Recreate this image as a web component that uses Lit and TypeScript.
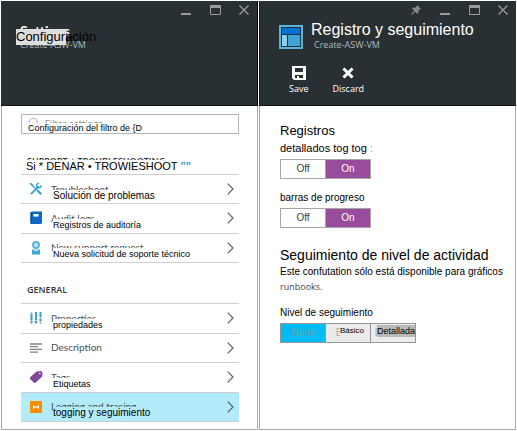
import { LitElement, html, css, svg, nothing } from "lit";
import { customElement, property } from "lit/decorators.js";
import { classMap } from "lit/directives/class-map.js";

const icons = {
  tools: svg`<g fill="none" stroke="#3ba3d0" stroke-linecap="round"><path d="M3.2 3.2 9 9" stroke-width="1.4"/><path d="M9 9 11.6 11.6" stroke-width="2.2"/><path d="M9.2 4.8 2.4 11.6" stroke-width="1.8"/><path d="M12 3.6A2.2 2.2 0 1 1 9.6 1.4" stroke-width="1.4"/><path d="M1.6 1.6 3.4 3.4" stroke-width="1.8"/></g>`,
  book: svg`<path fill="#0f6ac4" d="M1.5 1.5 3 0.5h10v11.5l-1 1H2l-.5-1z"/><path fill="#0a4d9c" d="M1.5 1.5h1.3V13H2l-.5-1z"/><path fill="#fff" d="M4.5 3h5v2.6h-5z"/>`,
  support: svg`<path fill="#59b4d9" d="M7 0a4 4 0 0 1 4 4c0 2.4-1.8 4.4-4 4.4S3 6.4 3 4a4 4 0 0 1 4-4z"/><circle cx="7" cy="4" r="2" fill="#c5e6f3"/><path fill="#3fa9d6" d="M3 8l4 2.500L11 8v5.500H3z"/><path fill="#a9dbee" d="M5 8.200h4L7 10.500z"/>`,
  sliders: svg`<path stroke="#aab4ba" stroke-width="1.4" d="M2.500 1v12M7 1v12M11.500 1v12"/><path stroke="#3ba3d0" stroke-width="2" d="M2.500 3v6M7 1v8M11.500 1v5"/><path stroke="#3ba3d0" stroke-width="2.4" d="M7 10v2M11.500 8v2M2.500 10v1.500"/>`,
  lines: svg`<path stroke="#808488" stroke-width="1.3" d="M1 3h12M1 5.700h8M1 8.400h12M1 11.100h8"/>`,
  tag: svg`<path fill="#804998" d="M7.500 1.600 12 1l1.500 1.200-.3 4.300-6.700 6.300-1.300.2L.8 8.700l.1-1.200z"/><circle cx="10.800" cy="3.600" r="1" fill="#d9bfe3"/>`,
  trace: svg`<path fill="#ff8c00" d="M1 1h12v12H1z"/><path fill="#fff" d="M4 5l2 1.500h2L10 5v4L8 7.500H6L4 9z"/>`,
};

type Row = { icon: keyof typeof icons; label: string; over?: string; large?: boolean; active?: boolean };

const supportRows: Row[] = [
  { icon: "tools", label: "Troubleshoot", over: "Solución de problemas", large: true },
  { icon: "book", label: "Audit logs", over: "Registros de auditoría" },
  { icon: "support", label: "New support request", over: "Nueva solicitud de soporte técnico" },
];
const generalRows: Row[] = [
  { icon: "sliders", label: "Properties", over: "propiedades" },
  { icon: "lines", label: "Description" },
  { icon: "tag", label: "Tags", over: "Etiquetas" },
  { icon: "trace", label: "Logging and tracing", over: "togging y seguimiento", large: true, active: true },
];

@customElement("window-controls")
class WindowControls extends LitElement {
  @property({ type: Boolean }) pin = false;

  static styles = css`
    :host { display: flex; justify-content: flex-end; gap: 19px; padding: 4px 8px 0; }
    button { all: unset; width: 10px; height: 10px; }
    svg { display: block; }
    path { fill: none; stroke: #999c9e; }
    .solid { fill: #85898b; stroke: none; }
  `;

  render() {
    return html`
      ${this.pin
        ? html`<button aria-label="Pin"><svg width="10" height="10"><path class="solid" d="M6 0l4 4-1.200.3-1.500 1.600.2 2.100-1.200.8L4.200 6.800.6 10 0 9.400 3.200 5.700 1.200 3.700l.8-1.200 2.200.2L5.800 1.200z"/></svg></button>`
        : nothing}
      <button aria-label="Minimize"><svg width="10" height="10"><path stroke-width="2" d="M0 9h10"/></svg></button>
      <button aria-label="Maximize"><svg width="11" height="10"><path d="M.5.5h10v9H.5z"/><path stroke-width="2" d="M0 2h11"/></svg></button>
      <button aria-label="Close"><svg width="10" height="10"><path stroke-width="1.3" d="M.5.5l9 9M9.500.5l-9 9"/></svg></button>
    `;
  }
}

@customElement("option-switch")
class OptionSwitch extends LitElement {
  @property() name = "";
  @property() label = "";

  static styles = css`
    fieldset { display: inline-flex; margin: 0; padding: 0; min-width: 0; border: 1px solid #a6a6a6; }
    label { display: block; width: 44px; height: 18px; text-align: center; font: 10px/18px "Liberation Sans", Arial, sans-serif; color: #3c3c3c; }
    label + label { border-left: 1px solid #a6a6a6; }
    input { position: absolute; opacity: 0; margin: 0; }
    label:has(:checked) { background: #984c9b; color: #fff; }
  `;

  render() {
    return html`<fieldset aria-label=${this.label}>
      <label><input type="radio" name=${this.name} />Off</label>
      <label><input type="radio" name=${this.name} checked />On</label>
    </fieldset>`;
  }
}

@customElement("app-root")
class AppRoot extends LitElement {
  static styles = css`
    :host { display: block; background: #fff; color: #000; font: 10px/12px "Liberation Sans", Arial, sans-serif; }
    h1, h2, p, ul { margin: 0; padding: 0; font-weight: 400; list-style: none; }
    .page { display: grid; grid-template-columns: 1fr 1fr; gap: 1px; padding: 1px; }
    .blade { display: flex; flex-direction: column; min-width: 0; }
    header { height: 105px; box-sizing: border-box; background: #293034; border-bottom: 1px solid #111517; }
    .left header { border-right: 1px solid #000; }
    .right header { border-left: 1px solid #1a1f22; }
    .body { flex: 1; border: 1px solid #a9a9a9; border-top: 0; }
    .left .body { padding: 8px 18px 7px 19px; }
    .right .body { padding: 16px 6px 8px 20px; }

    .orig { font-family: Lato, "Open Sans", sans-serif; }
    .stack { position: relative; }
    .over { position: absolute; top: 8px; left: 2px; font: 9px/12px "Liberation Sans", Arial, sans-serif; color: #000; background: #fff; white-space: nowrap; }
    .over.large { font-size: 10px; }

    .titles { padding: 8px 0 0 19px; }
    .titles h1 { font-size: 14px; line-height: 16px; font-weight: 700; color: #fff; }
    .sub { font-family: "Open Sans", sans-serif; font-size: 9px; line-height: 12px; color: #b4b8ba; }
    .titles .over { top: 14px; left: 15px; width: 50px; font-size: 13px; line-height: 16px; background: #dedede; }

    .brand { display: flex; gap: 8px; padding: 5px 0 0 19px; }
    .brand svg { margin-top: 5px; }
    .brand h1 { font-size: 16px; line-height: 20px; color: #fff; white-space: nowrap; }
    .brand .sub { padding-left: 3px; line-height: 10px; }
    .actions { display: flex; gap: 24px; padding: 16px 0 0 29px; }
    .actions button { all: unset; display: flex; flex-direction: column; align-items: center; gap: 2px; font: 9px/14px "Open Sans", sans-serif; color: #fff; }

    .filter input { display: block; box-sizing: border-box; width: 100%; height: 20px; padding: 0 0 0 22px; border: 1px solid #b5b5b5; border-radius: 0; font: italic 10px/18px "Open Sans", sans-serif; }
    .filter input::placeholder { color: #8a8a8a; opacity: 1; }
    .filter svg { position: absolute; left: 7px; top: 3px; }
    .filter .over { left: 7px; top: 9px; line-height: 10px; }

    h2.group { height: 40px; box-sizing: border-box; padding: 19px 0 0 6px; font: 600 9px/16px "Open Sans", sans-serif; color: #33373a; }
    .group .over { left: 5px; top: 26px; font-size: 11px; line-height: 12px; }
    .group .mark { color: #3f93d8; font-weight: 700; }
    ul { display: flex; flex-direction: column; box-sizing: border-box; border-bottom: 1px solid #cfcfcf; }
    .support { height: 89px; }
    .general { height: 119px; }
    li { flex: 1; display: flex; border-top: 1px solid #cfcfcf; }
    li a { flex: 1; display: flex; align-items: center; padding: 0 5px 0 8px; color: #4a4e52; text-decoration: none; }
    li a .stack { flex: 1; margin-left: 8px; font-size: 10px; line-height: 14px; }
    .active, .active .over { background: #b2ebfa; }

    .right h2 { font-size: 13px; line-height: 18px; }
    .right h2.wide { font-size: 14px; margin-top: 18px; }
    .lead { font-size: 11px; line-height: 16px; padding-bottom: 3px; }
    .field { padding: 13px 0 4px; line-height: 12px; }
    .pale { color: #999; }
    option-switch { display: block; height: 20px; }
    .note { line-height: 15px; white-space: nowrap; }
    .note .orig { font-family: "Open Sans", sans-serif; font-size: 9px; color: #44484b; }
    .levels { display: inline-flex; margin: 0; padding: 0; border: 1px solid #969696; }
    .levels label { position: relative; width: 44px; height: 18px; text-align: center; font: 10px/18px "Liberation Sans", Arial, sans-serif; color: #adadad; background: #ebebeb; }
    .levels label + label { border-left: 1px solid #969696; }
    .levels input { position: absolute; opacity: 0; margin: 0; }
    .levels label:has(:checked) { background: #00bcf2; color: #6a9fb0; }
    .levels .over { top: 1px; left: 6px; line-height: 12px; background: #b9b9b9; }
    .levels .over.small { font-size: 8px; left: 14px; background: #ebebeb; }
  `;

  private list(rows: Row[], cls: string) {
    return html`<ul class=${cls}>
      ${rows.map(
        (r) => html`<li class=${classMap({ active: !!r.active })}>
          <a href="#">
            <svg width="14" height="14" aria-hidden="true">${icons[r.icon]}</svg>
            <span class="stack"><span class="orig">${r.label}</span>${r.over
                ? html`<span class=${classMap({ over: true, large: !!r.large })}>${r.over}</span>`
                : nothing}</span>
            <svg width="7" height="12" aria-hidden="true"><path d="M.7.7 6 6 .7 11.300" fill="none" stroke="#5c6064" stroke-width="1.2"/></svg>
          </a>
        </li>`
      )}
    </ul>`;
  }

  render() {
    return html`<main class="page">
      <section class="blade left">
        <header>
          <window-controls></window-controls>
          <div class="titles stack">
            <h1 class="orig">Settings</h1>
            <p class="sub">Create-ASW-VM</p>
            <span class="over">Configuración</span>
          </div>
        </header>
        <div class="body">
          <div class="filter stack">
            <input type="text" aria-label="Filter settings" placeholder="Filter settings" />
            <svg width="12" height="12" aria-hidden="true"><path d="M3 8.500A4 4 0 1 1 7.500 8.500" fill="none" stroke="#aaa"/></svg>
            <span class="over">Configuración del filtro de {D</span>
          </div>
          <h2 class="group stack">SUPPORT + TROUBLESHOOTING<span class="over">Si * DENAR • TROWIESHOOT <span class="mark">""</span></span></h2>
          ${this.list(supportRows, "support")}
          <h2 class="group">GENERAL</h2>
          ${this.list(generalRows, "general")}
        </div>
      </section>
      <section class="blade right">
        <header>
          <window-controls pin></window-controls>
          <div class="brand">
            <svg width="24" height="24" aria-hidden="true"><path fill="#59b4d9" d="M0 0h24v24H0z"/><path fill="#21323c" d="M2 2h20v20H2z"/><path fill="#0072d6" d="M3 3h18v6H3z"/><path fill="#8fd0ec" d="M3 10h5v11H3z"/><path fill="#3ea5d6" d="M9 10h12v11H9z"/></svg>
            <div>
              <h1>Registro y seguimiento</h1>
              <p class="sub">Create-ASW-VM</p>
            </div>
          </div>
          <div class="actions">
            <button><svg width="14" height="14" aria-hidden="true"><path fill="#fff" fill-rule="evenodd" d="M0 0h14v14H2l-2-2zM3 2v4h8V2zM3 9v3h2v-2h2v2h4V9z"/></svg>Save</button>
            <button><svg width="14" height="14" aria-hidden="true"><path d="M2.500 2.500l9 9M11.500 2.500l-9 9" stroke="#fff" stroke-width="3"/></svg>Discard</button>
          </div>
        </header>
        <div class="body">
          <h2>Registros</h2>
          <p class="lead">detallados tog tog <span class="pale">:</span></p>
          <option-switch name="verbose" label="Registros detallados"></option-switch>
          <p class="field">barras de progreso</p>
          <option-switch name="progress" label="barras de progreso"></option-switch>
          <h2 class="wide">Seguimiento de nivel de actividad</h2>
          <p class="note">Este confutation sólo está disponible para gráficos<br /><span class="orig">runbooks.</span></p>
          <p class="field">Nivel de seguimiento</p>
          <fieldset class="levels" aria-label="Nivel de seguimiento">
            <label><input type="radio" name="level" checked />None</label>
            <label><input type="radio" name="level" />Basic<span class="over small">Básico</span></label>
            <label><input type="radio" name="level" />Detailed<span class="over">Detallada</span></label>
          </fieldset>
        </div>
      </section>
    </main>`;
  }
}
